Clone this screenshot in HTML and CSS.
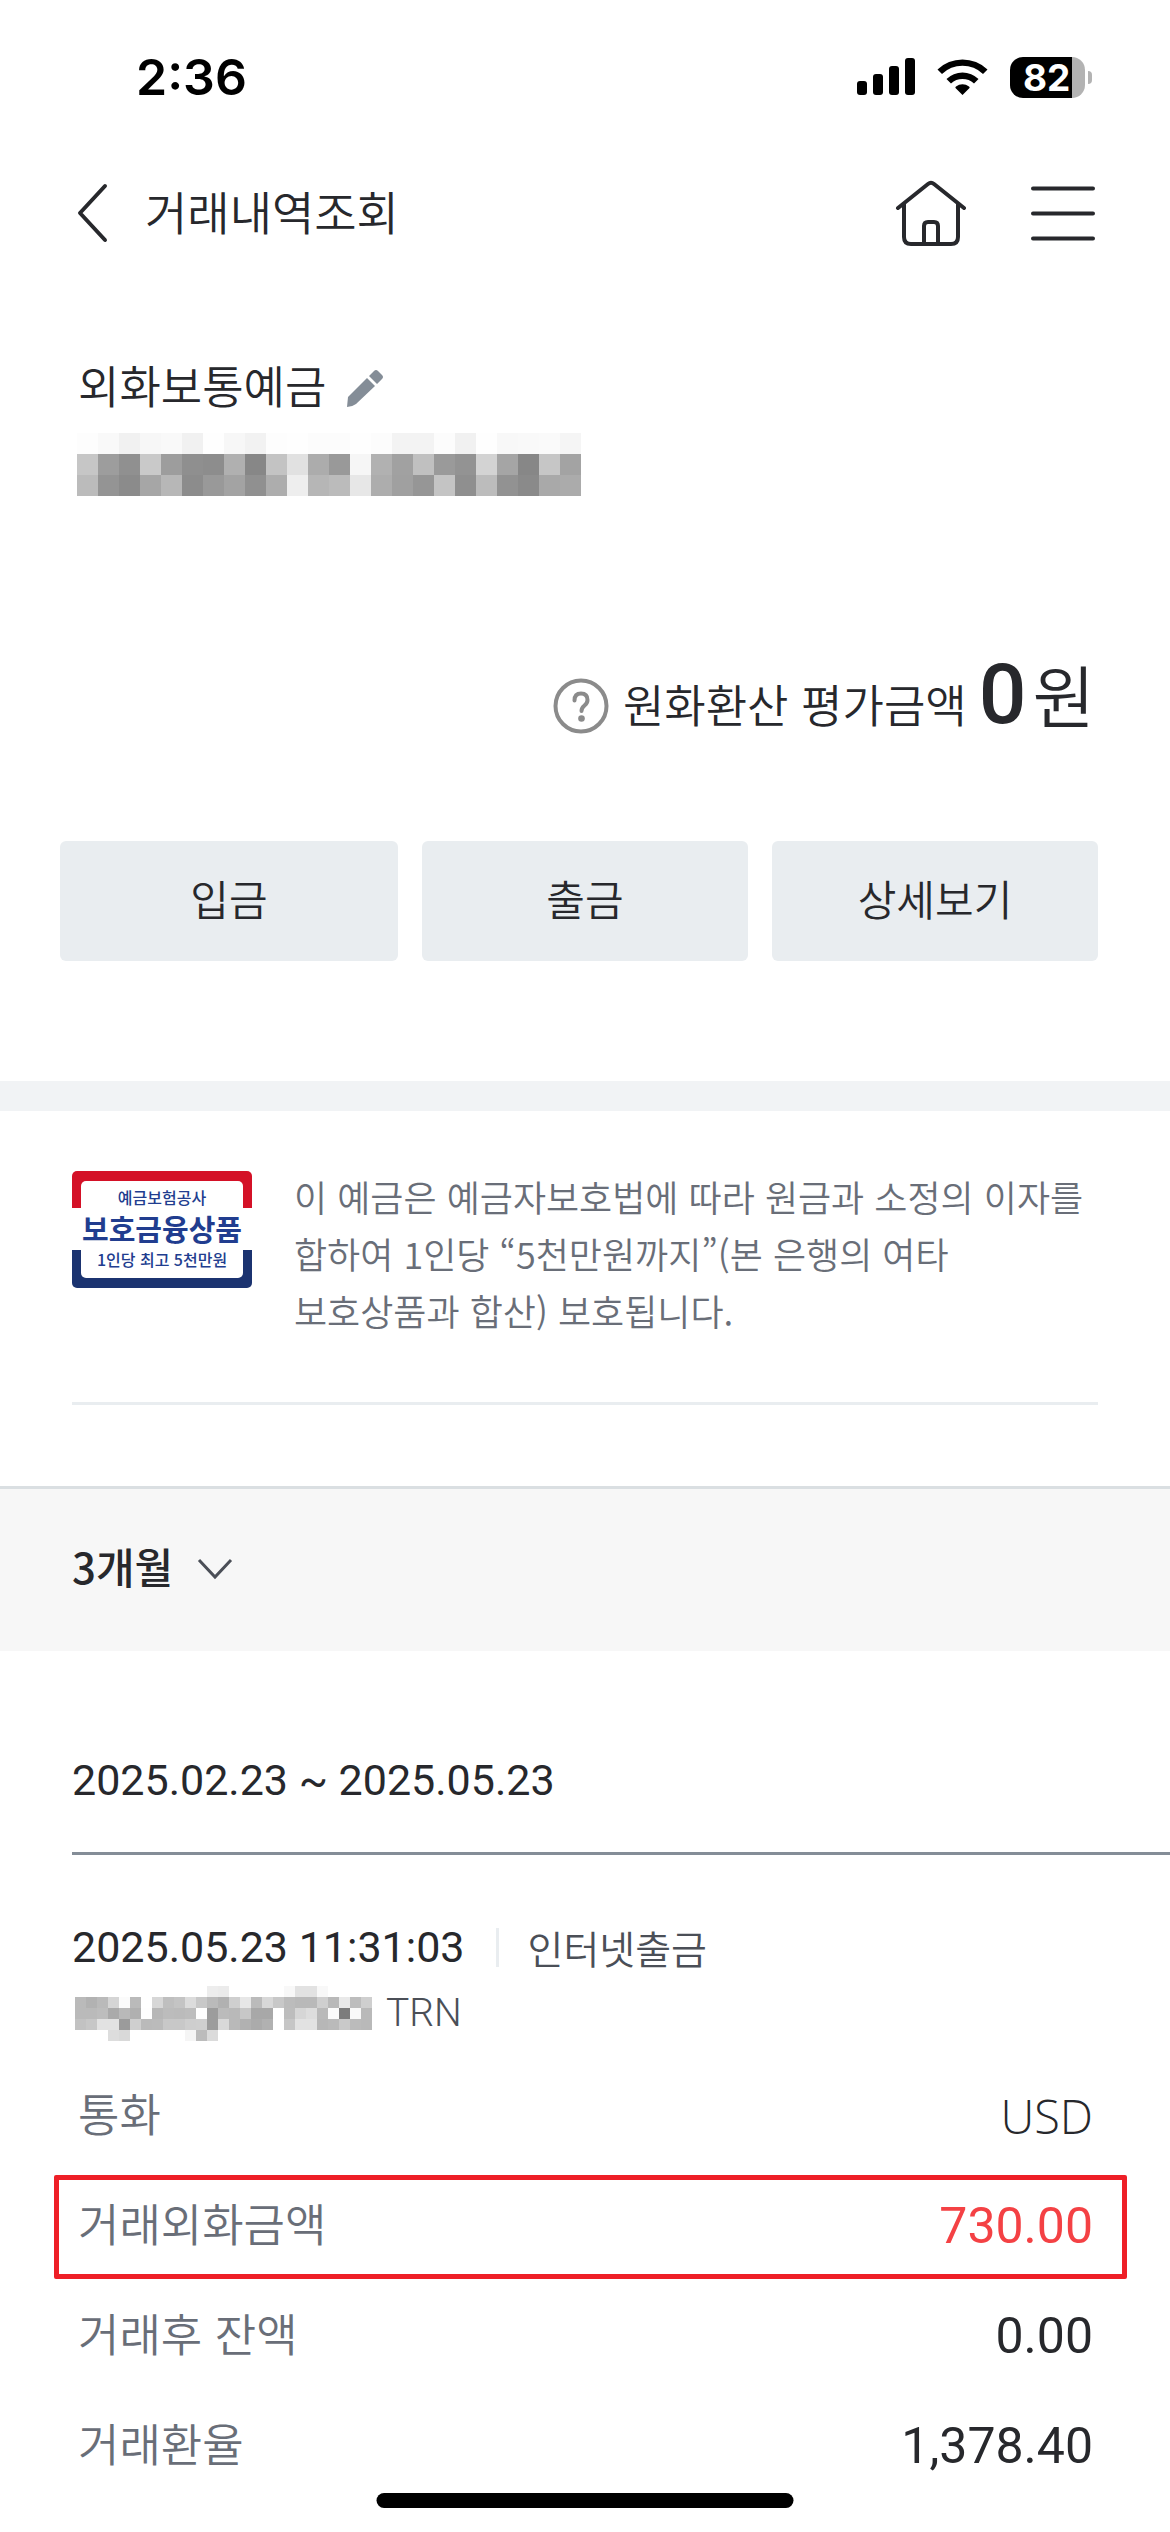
FILE: index.html
```html
<!DOCTYPE html>
<html lang="ko">
<head>
<meta charset="utf-8">
<meta name="viewport" content="width=device-width, initial-scale=1">
<title>거래내역조회</title>
<link rel="stylesheet" href="styles.css">
<script src="script.js" defer></script>
</head>
<body>
<div class="status-bar">
  <span class="clock">2:36</span>
  <div class="status-icons">
    <svg width="58" height="38" viewBox="0 0 58 38" aria-hidden="true">
      <rect x="0" y="23" width="10" height="14" rx="3"/>
      <rect x="16" y="16" width="10" height="21" rx="3"/>
      <rect x="32" y="8" width="10" height="29" rx="3"/>
      <rect x="48" y="0" width="10" height="37" rx="3"/>
    </svg>
    <svg width="51" height="38" viewBox="0 0 51 38" aria-hidden="true">
      <path d="M25.500 37 L18.500 30 Q18 29 19 28.500 A11 11 0 0 1 32 28.500 Q33 29 32.500 30Z"/>
      <path d="M9.500 21 A23 23 0 0 1 41.500 21 L37 25.500 A17 17 0 0 0 14 25.500Z" />
      <path d="M0.500 11.500 A36 36 0 0 1 50.500 11.500 L46 16 A29.500 29.500 0 0 0 5 16Z" />
    </svg>
    <div class="battery"><span class="battery-level">82</span></div>
  </div>
</div>

<header class="app-header">
  <button class="icon-button" type="button" aria-label="뒤로">
    <svg width="32" height="62" viewBox="0 0 32 62"><path class="line" d="M29 4 L4 31 L29 58"/></svg>
  </button>
  <h1 class="title">거래내역조회</h1>
  <button class="icon-button" type="button" aria-label="홈">
    <svg width="72" height="66" viewBox="0 0 72 66"><path class="line" d="M3 28 L33 4 Q36 1.500 39 4 L69 28 M9 24 V57 Q9 64 16 64 H56 Q63 64 63 57 V24 M29 63 V46 Q29 42 33 42 H39 Q43 42 43 46 V63"/></svg>
  </button>
  <button class="icon-button menu-button" type="button" aria-label="메뉴">
    <svg width="64" height="66" viewBox="0 0 64 66"><path class="line" d="M2 8.500 H62 M2 33.500 H62 M2 58.500 H62"/></svg>
  </button>
</header>

<main>
  <section class="account">
    <div class="account-name">
      <h2 class="name">외화보통예금</h2>
      <button class="icon-button" type="button" aria-label="별칭 수정">
        <svg width="38" height="38" viewBox="0 0 38 38"><path fill="#848d97" d="M1 38 L2 28 L21 9 L29 17 L10 35 Q6 38 1 38Z M23 7 L28 2 Q30 0 32 2 L36 6 Q38 8 36 10 L31 15Z"/></svg>
      </button>
    </div>
    <svg class="mosaic" viewBox="0 0 24 3" width="504" height="63" role="img" aria-label="계좌번호 가림"
      data-shades="fdf9f1f7f9f1fef7f2fdfefcfcfefcf3f3fcf1fef8f9faf5 c69d90c99d8f8db087c3e1ac99f6b1a1c09a93d3a587c6a3 bb948ba6b78c99a390adeeb6bbe7ada096c48fbc928aa9ab"></svg>
    <div class="balance">
      <button class="icon-button help" type="button" aria-label="도움말">
        <svg width="56" height="56" viewBox="0 0 56 56"><circle class="help-line" cx="28" cy="28" r="25.500"/><path class="help-line" d="M21.500 22.500 Q21.500 15.500 28 15.500 Q34.500 15.500 34.500 22 Q34.500 25 31.500 27.500 Q28.500 30 28.500 33"/><circle cx="28.500" cy="40.500" r="3.300" fill="#8b8b8b"/></svg>
      </button>
      <span class="balance-label">원화환산 평가금액</span>
      <strong class="balance-value">0</strong>
      <span class="balance-unit">원</span>
    </div>
    <div class="actions">
      <button class="action" type="button">입금</button>
      <button class="action" type="button">출금</button>
      <button class="action" type="button">상세보기</button>
    </div>
  </section>

  <section class="notice">
    <div class="notice-body">
      <div class="badge">
        <div class="badge-inner">
          <span class="badge-small">예금보험공사</span>
          <span class="badge-large">보호금융상품</span>
          <span class="badge-small">1인당 최고 5천만원</span>
        </div>
      </div>
      <p class="notice-text">이 예금은 예금자보호법에 따라 원금과 소정의 이자를 합하여 1인당 “5천만원까지”(본 은행의 여타 보호상품과 합산) 보호됩니다.</p>
    </div>
  </section>

  <div class="filter">
    <button class="filter-button" type="button"><span>3개월</span>
      <svg width="36" height="22" viewBox="0 0 36 22" aria-hidden="true"><path fill="none" stroke="#4b4f57" stroke-width="3" d="M2 2 L18 19 L34 2"/></svg>
    </button>
  </div>

  <section class="history">
    <h2 class="period">2025.02.23 ~ 2025.05.23</h2>
    <article class="entry">
      <div class="entry-head">
        <time class="entry-time" datetime="2025-05-23T11:31:03">2025.05.23 11:31:03</time>
        <span class="entry-type">인터넷출금</span>
      </div>
      <div class="entry-memo">
        <svg class="mosaic" viewBox="0 0 27 5" width="297" height="55" role="img" aria-label="거래자 가림"
          data-shades="ffffffffffffffffffffffffedebfffffffffff8e2e2f8ffffffff bab2bad5fbbaffd7bfc4dcc8bab1cfe7bbd8c8bcb9b9cfb9e9bdcf bababdaab9b0feb7bcbbbdfe9cbbb9c7a8a8ffbdd6ddb9fb7cf9b9 c2c7e2e29bcfbabbc8c8cecf9cd9b9b1abb1ffc6e2e2b7bac9bbb9 ffffffddd9fffffffffff5bcdbffffffffffffffffffffffffffff"></svg>
        <span>TRN</span>
      </div>
      <dl class="details">
        <div class="row"><dt>통화</dt><dd class="code">USD</dd></div>
        <div class="row marked"><dt>거래외화금액</dt><dd class="out">730.00</dd></div>
        <div class="row"><dt>거래후 잔액</dt><dd>0.00</dd></div>
        <div class="row"><dt>거래환율</dt><dd>1,378.40</dd></div>
      </dl>
    </article>
  </section>
</main>
<div class="home-indicator"></div>
</body>
</html>
```

FILE: styles.css
```css
* { box-sizing: border-box; }

body {
  position: relative;
  margin: 0;
  background: #fff;
  color: #27282c;
  font-family: "Noto Sans CJK KR", sans-serif;
  font-weight: 350;
  font-size: 45px;
  line-height: 60px;
}

h1, h2, p, dl, dd { margin: 0; font-size: inherit; font-weight: inherit; }
svg { display: block; flex: none; }
button { font: inherit; color: inherit; border: 0; padding: 0; background: none; }

.line { fill: none; stroke: #27282c; stroke-width: 4; stroke-linecap: round; stroke-linejoin: round; }
.help-line { fill: none; stroke: #8b8b8b; stroke-width: 4; stroke-linecap: round; }
.icon-button { flex: none; }

/* Status bar */
.status-bar {
  display: flex;
  align-items: center;
  justify-content: space-between;
  height: 154px;
  padding: 0 78px 0 136px;
  color: #000;
  font-family: Inter, sans-serif;
}
.clock { font-size: 50px; font-weight: 600; }
.status-icons { display: flex; align-items: center; gap: 22px; }
.battery {
  position: relative;
  width: 75px;
  height: 41px;
  margin-right: 7px;
  border-radius: 13px;
  background: linear-gradient(to right, #000 62px, #b3b3b3 62px);
}
.battery::after {
  content: "";
  position: absolute;
  left: 78px;
  top: 14px;
  width: 4px;
  height: 13px;
  border-radius: 0 4px 4px 0;
  background: #b3b3b3;
}
.battery-level {
  display: block;
  padding-left: 13px;
  color: #fff;
  font-size: 37px;
  font-weight: 700;
  line-height: 41px;
}

/* App header */
.app-header {
  display: flex;
  align-items: center;
  height: 118px;
  padding: 0 75px 0 76px;
}
.title { flex: 1; padding: 0 0 6px 37px; font-size: 46px; }
.menu-button { margin-left: 64px; }

/* Account summary */
.account { padding: 86px 72px 120px 60px; }
.account-name { display: flex; align-items: center; gap: 20px; height: 60px; padding-left: 18px; }
.name { padding-bottom: 6px; }
.account .mosaic { margin: 15px 0 0 17px; }
.balance {
  display: flex;
  align-items: baseline;
  justify-content: flex-end;
  height: 120px;
  margin-top: 138px;
  padding-right: 3px;
  line-height: 120px;
}
.help { align-self: center; margin-right: 14px; padding-top: 24px; }
.balance-value { margin: 0 6px 0 12px; font-family: Roboto, sans-serif; font-size: 84px; font-weight: 500; }
.balance-unit { font-size: 68px; }
.actions { display: grid; grid-template-columns: 338fr 326fr 326fr; gap: 24px; margin-top: 87px; }
.action { height: 120px; padding-bottom: 6px; border-radius: 6px; background: #e9edf0; font-size: 42px; }

/* Deposit protection notice */
.notice { padding: 60px 72px 81px; border-top: 30px solid #f1f3f5; }
.notice-body { display: flex; align-items: flex-start; gap: 42px; border-bottom: 3px solid #e9edf0; }
.badge {
  flex: none;
  width: 180px;
  padding: 10px;
  border-radius: 5px;
  background: linear-gradient(#d41127 37px, #fff 37px, #fff 79px, #1b3370 79px);
}
.badge-inner {
  display: flex;
  flex-direction: column;
  align-items: center;
  height: 97px;
  margin: 0 -1px;
  border-radius: 5px;
  background: #fff;
  color: #213d8f;
  white-space: nowrap;
}
.badge-small { font-size: 16px; font-weight: 500; line-height: 32px; }
.badge-large { font-size: 29px; font-weight: 700; line-height: 30px; }
.notice-text { flex: 1; margin-top: -3px; padding-bottom: 63px; color: #696e78; font-size: 36px; line-height: 57px; word-break: keep-all; }

/* Period filter */
.filter { padding: 42px 72px; border-top: 3px solid #dadfe2; background: #f7f7f7; }
.filter-button { display: flex; align-items: center; gap: 24px; height: 75px; margin-bottom: 3px; font-size: 42px; font-weight: 500; }
.filter-button span { padding-bottom: 6px; }

/* Transactions */
.history { padding: 99px 0 0 72px; }
.period {
  padding-bottom: 42px;
  border-bottom: 3px solid #848d97;
  font-family: Roboto, "Noto Sans CJK KR", sans-serif;
  font-size: 43px;
  font-weight: 400;
}
.entry { padding: 62px 72px 0 0; color: #4b4f57; }
.entry-head { display: flex; align-items: center; }
.entry-time { color: #27282c; font-family: Roboto, sans-serif; font-size: 43px; font-weight: 400; }
.entry-type {
  margin-left: 31px;
  padding-left: 29px;
  border-left: 3px solid #e9edf0;
  font-size: 39px;
  line-height: 39px;
}
.entry-memo { display: flex; align-items: center; gap: 14px; margin-top: 6px; padding-left: 3px; font-family: Roboto, sans-serif; font-size: 39px; font-weight: 300; }
.details { padding: 19px 5px 0 6px; }
.row { position: relative; display: flex; align-items: center; justify-content: space-between; height: 110px; color: #696e78; }
.row dt { padding-bottom: 8px; }
.row dd { padding-bottom: 2px; color: #27282c; font-family: Roboto, sans-serif; font-size: 50px; font-weight: 400; }
.row .code { font-family: "Open Sans", sans-serif; font-size: 47px; font-weight: 300; }
.row .out { color: #f44144; }
.marked::after {
  content: "";
  position: absolute;
  inset: 3px -34px 3px -24px;
  border: 5px solid #ee1f27;
  border-radius: 2px;
}

.home-indicator {
  position: fixed;
  bottom: 24px;
  left: 50%;
  width: 417px;
  height: 15px;
  border-radius: 8px;
  background: #000;
  transform: translateX(-50%);
}
```

FILE: script.js
```js
// Fills each privacy mosaic with one square per two-digit grey shade.
document.querySelectorAll(".mosaic").forEach((svg) => {
  svg.setAttribute("shape-rendering", "crispEdges");
  svg.dataset.shades.split(" ").forEach((row, y) => {
    row.match(/../g).forEach((shade, x) => {
      const cell = document.createElementNS("http://www.w3.org/2000/svg", "rect");
      cell.setAttribute("x", x);
      cell.setAttribute("y", y);
      cell.setAttribute("width", 1);
      cell.setAttribute("height", 1);
      cell.setAttribute("fill", "#" + shade.repeat(3));
      svg.append(cell);
    });
  });
});
```
